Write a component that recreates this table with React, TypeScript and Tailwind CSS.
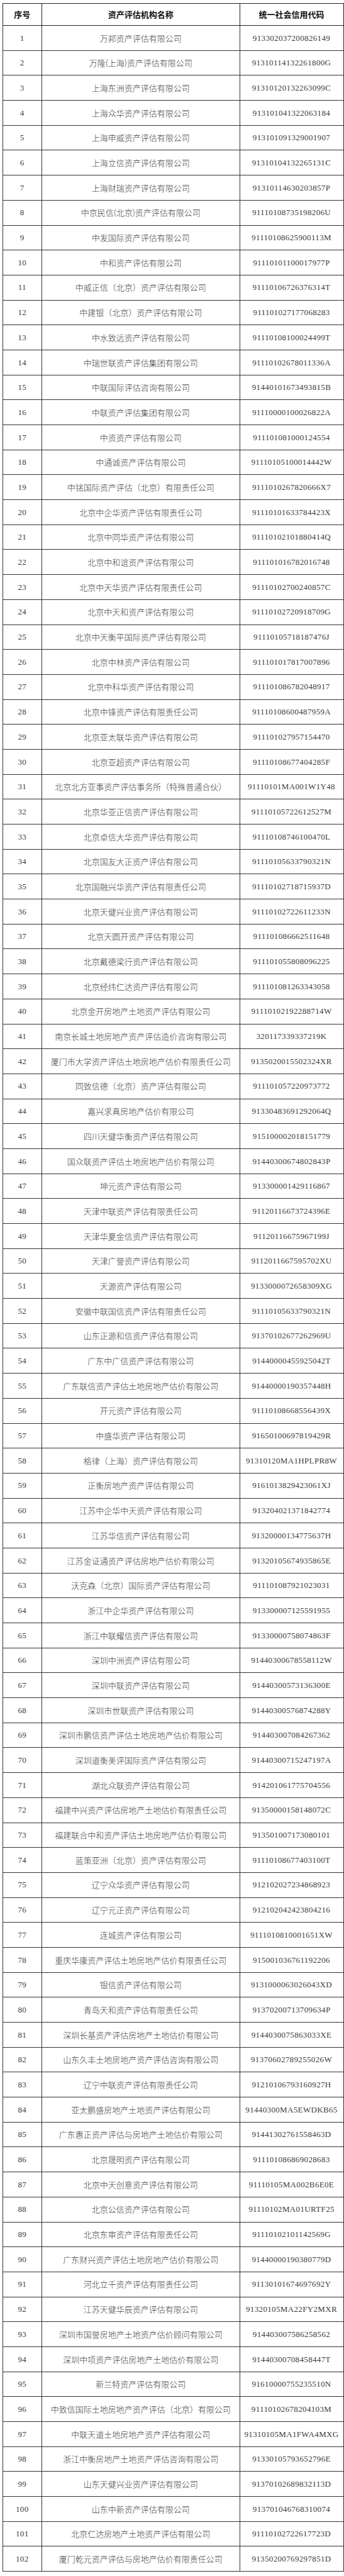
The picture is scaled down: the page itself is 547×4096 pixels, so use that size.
const rows: [string, string][] = [
  ['万邦资产评估有限公司', '913302037200826149'],
  ['万隆(上海)资产评估有限公司', '91310114132261800G'],
  ['上海东洲资产评估有限公司', '91310120132263099C'],
  ['上海众华资产评估有限公司', '913101041322063184'],
  ['上海申威资产评估有限公司', '913101091329001907'],
  ['上海立信资产评估有限公司', '91310104132265131C'],
  ['上海财瑞资产评估有限公司', '91310114630203857P'],
  ['中京民信(北京)资产评估有限公司', '91110108735198206U'],
  ['中发国际资产评估有限公司', '91110108625900113M'],
  ['中和资产评估有限公司', '91110101100017977P'],
  ['中威正信（北京）资产评估有限公司', '91110106726376314T'],
  ['中建银（北京）资产评估有限公司', '911101027177068283'],
  ['中水致远资产评估有限公司', '91110108100024499T'],
  ['中瑞世联资产评估集团有限公司', '91110102678011336A'],
  ['中联国际评估咨询有限公司', '91440101673493815B'],
  ['中联资产评估集团有限公司', '91110000100026822A'],
  ['中资资产评估有限公司', '911101081000124554'],
  ['中通诚资产评估有限公司', '91110105100014442W'],
  ['中铭国际资产评估（北京）有限责任公司', '9111010267820666X7'],
  ['北京中企华资产评估有限责任公司', '91110101633784423X'],
  ['北京中同华资产评估有限公司', '91110102101880414Q'],
  ['北京中和谊资产评估有限公司', '911101016782016748'],
  ['北京中天华资产评估有限责任公司', '91110102700240857C'],
  ['北京中天和资产评估有限公司', '91110102720918709G'],
  ['北京中天衡平国际资产评估有限公司', '91110105718187476J'],
  ['北京中林资产评估有限公司', '911101017817007896'],
  ['北京中科华资产评估有限公司', '911101086782048917'],
  ['北京中锋资产评估有限责任公司', '91110108600487959A'],
  ['北京亚太联华资产评估有限公司', '911101027957154470'],
  ['北京亚超资产评估有限公司', '91110108677404285F'],
  ['北京北方亚事资产评估事务所（特殊普通合伙）', '91110101MA001W1Y48'],
  ['北京华亚正信资产评估有限公司', '91110105722612527M'],
  ['北京卓信大华资产评估有限公司', '91110108746100470L'],
  ['北京国友大正资产评估有限公司', '91110105633790321N'],
  ['北京国融兴华资产评估有限责任公司', '91110102718715937D'],
  ['北京天健兴业资产评估有限公司', '91110102722611233N'],
  ['北京天圆开资产评估有限公司', '911101086662511648'],
  ['北京戴德梁行资产评估有限公司', '911101055808096225'],
  ['北京经纬仁达资产评估有限公司', '911101081263343058'],
  ['北京金开房地产土地资产评估有限公司', '91110102192288714W'],
  ['南京长城土地房地产资产评估造价咨询有限公司', '320117339337219K'],
  ['厦门市大学资产评估土地房地产估价有限责任公司', '9135020015502324XR'],
  ['同致信德（北京）资产评估有限公司', '911101057220973772'],
  ['嘉兴求真房地产估价有限公司', '91330483691292064Q'],
  ['四川天健华衡资产评估有限公司', '915100002018151779'],
  ['国众联资产评估土地房地产估价有限公司', '91440300674802843P'],
  ['坤元资产评估有限公司', '913300001429116867'],
  ['天津中联资产评估有限责任公司', '91120116673724396E'],
  ['天津华夏金信资产评估有限公司', '91120116675967199J'],
  ['天津广誉资产评估有限公司', '9112011667595702XU'],
  ['天源资产评估有限公司', '9133000072658309XG'],
  ['安徽中联国信资产评估有限责任公司', '91110105633790321N'],
  ['山东正源和信资产评估有限公司', '91370102677262969U'],
  ['广东中广信资产评估有限公司', '91440000455925042T'],
  ['广东联信资产评估土地房地产估价有限公司', '91440000190357448H'],
  ['开元资产评估有限公司', '91110108668556439X'],
  ['中盛华资产评估有限公司', '91650100697819429R'],
  ['格律（上海）资产评估有限公司', '91310120MA1HPLPR8W'],
  ['正衡房地产资产评估有限公司', '9161013829423061XJ'],
  ['江苏中企华中天资产评估有限公司', '913204021371842774'],
  ['江苏华信资产评估有限公司', '91320000134775637H'],
  ['江苏金证通资产评估房地产估价有限公司', '91320105674935865E'],
  ['沃克森（北京）国际资产评估有限公司', '911101087921023031'],
  ['浙江中企华资产评估有限公司', '913300007125591955'],
  ['浙江中联耀信资产评估有限公司', '91330000758074863F'],
  ['深圳中洲资产评估有限公司', '91440300678558112W'],
  ['深圳中联资产评估有限公司', '91440300573136300E'],
  ['深圳市世联资产评估有限公司', '91440300576874288Y'],
  ['深圳市鹏信资产评估土地房地产估价有限公司', '914403007084267362'],
  ['深圳道衡美评国际资产评估有限公司', '91440300715247197A'],
  ['湖北众联资产评估有限公司', '914201061775704556'],
  ['福建中兴资产评估房地产土地估价有限责任公司', '91350000158148072C'],
  ['福建联合中和资产评估土地房地产估价有限公司', '913501007173080101'],
  ['蓝策亚洲（北京）资产评估有限公司', '91110108677403100T'],
  ['辽宁众华资产评估有限公司', '912102027234868923'],
  ['辽宁元正资产评估有限公司', '912102042423804216'],
  ['连城资产评估有限公司', '9111010810001651XW'],
  ['重庆华康资产评估土地房地产估价有限责任公司', '915001036761192206'],
  ['银信资产评估有限公司', '9131000063026043XD'],
  ['青岛天和资产评估有限责任公司', '91370200713709634P'],
  ['深圳长基资产评估房地产土地估价有限公司', '9144030075863033XE'],
  ['山东久丰土地房地产资产评估咨询有限公司', '91370602789255026W'],
  ['辽宁中联资产评估有限责任公司', '91210106793160927H'],
  ['亚太鹏盛房地产土地资产评估有限公司', '91440300MA5EWDKB65'],
  ['广东惠正资产评估与房地产土地估价有限公司', '91441302761558463D'],
  ['北京晟明资产评估有限公司', '911101086869028683'],
  ['北京中天创意资产评估有限公司', '91110105MA002B6E0E'],
  ['北京公信资产评估有限公司', '91110102MA01URTF25'],
  ['北京东审资产评估有限责任公司', '91110102101142569G'],
  ['广东财兴资产评估土地房地产估价有限公司', '91440000190380779D'],
  ['河北立千资产评估有限责任公司', '91130101674697692Y'],
  ['江苏天健华辰资产评估有限公司', '91320105MA22FY2MXR'],
  ['深圳市国誉房地产土地资产估价顾问有限公司', '914403007586258562'],
  ['深圳中项资产评估房地产土地估价有限公司', '91440300708458447T'],
  ['新兰特资产评估有限公司', '91610000755235510N'],
  ['中致信国际土地房地产资产评估（北京）有限公司', '91110102678204103M'],
  ['中联天道土地房地产资产评估有限公司', '91310105MA1FWA4MXG'],
  ['浙江中衡房地产土地资产评估咨询有限公司', '91330105793652796E'],
  ['山东天健兴业资产评估有限公司', '91370102689832113D'],
  ['山东中新资产评估有限公司', '913701046768310074'],
  ['北京仁达房地产土地资产评估有限公司', '91110102722617723D'],
  ['厦门乾元资产评估与房地产估价有限责任公司', '91350200769297851D'],
];

export default function App() {
  return (
    <div className="bg-white w-[547px] pt-[5px] pl-[3.5px] font-['Liberation_Serif','Noto_Sans_CJK_SC',serif]">
      <table className="table-fixed border-collapse w-[542px] text-[13px] text-[#3d3d3d]">
        <colgroup>
          <col className="w-[62.5px]" />
          <col className="w-[314.5px]" />
          <col className="w-[165px]" />
        </colgroup>
        <thead>
          <tr className="h-[35px] font-['Noto_Sans_CJK_SC',sans-serif] font-bold text-[#111]">
            <th className="border border-[#222] text-center p-0">序号</th>
            <th className="border border-[#222] text-center p-0">资产评估机构名称</th>
            <th className="border border-[#222] border-l-[#8a8a8a] text-center p-0">统一社会信用代码</th>
          </tr>
        </thead>
        <tbody>
          {rows.map(([name, code], i) => (
            <tr key={i} className="h-[39.7px]">
              <td className="border border-[#333] text-center p-0 tracking-[0.3px]">{i + 1}</td>
              <td className="border border-[#333] text-center p-0 font-['Noto_Sans_CJK_SC',serif] font-light whitespace-nowrap">{name}</td>
              <td className="border border-[#333] border-l-[#8a8a8a] text-center p-0 tracking-[0.35px]">{code}</td>
            </tr>
          ))}
        </tbody>
      </table>
    </div>
  );
}
